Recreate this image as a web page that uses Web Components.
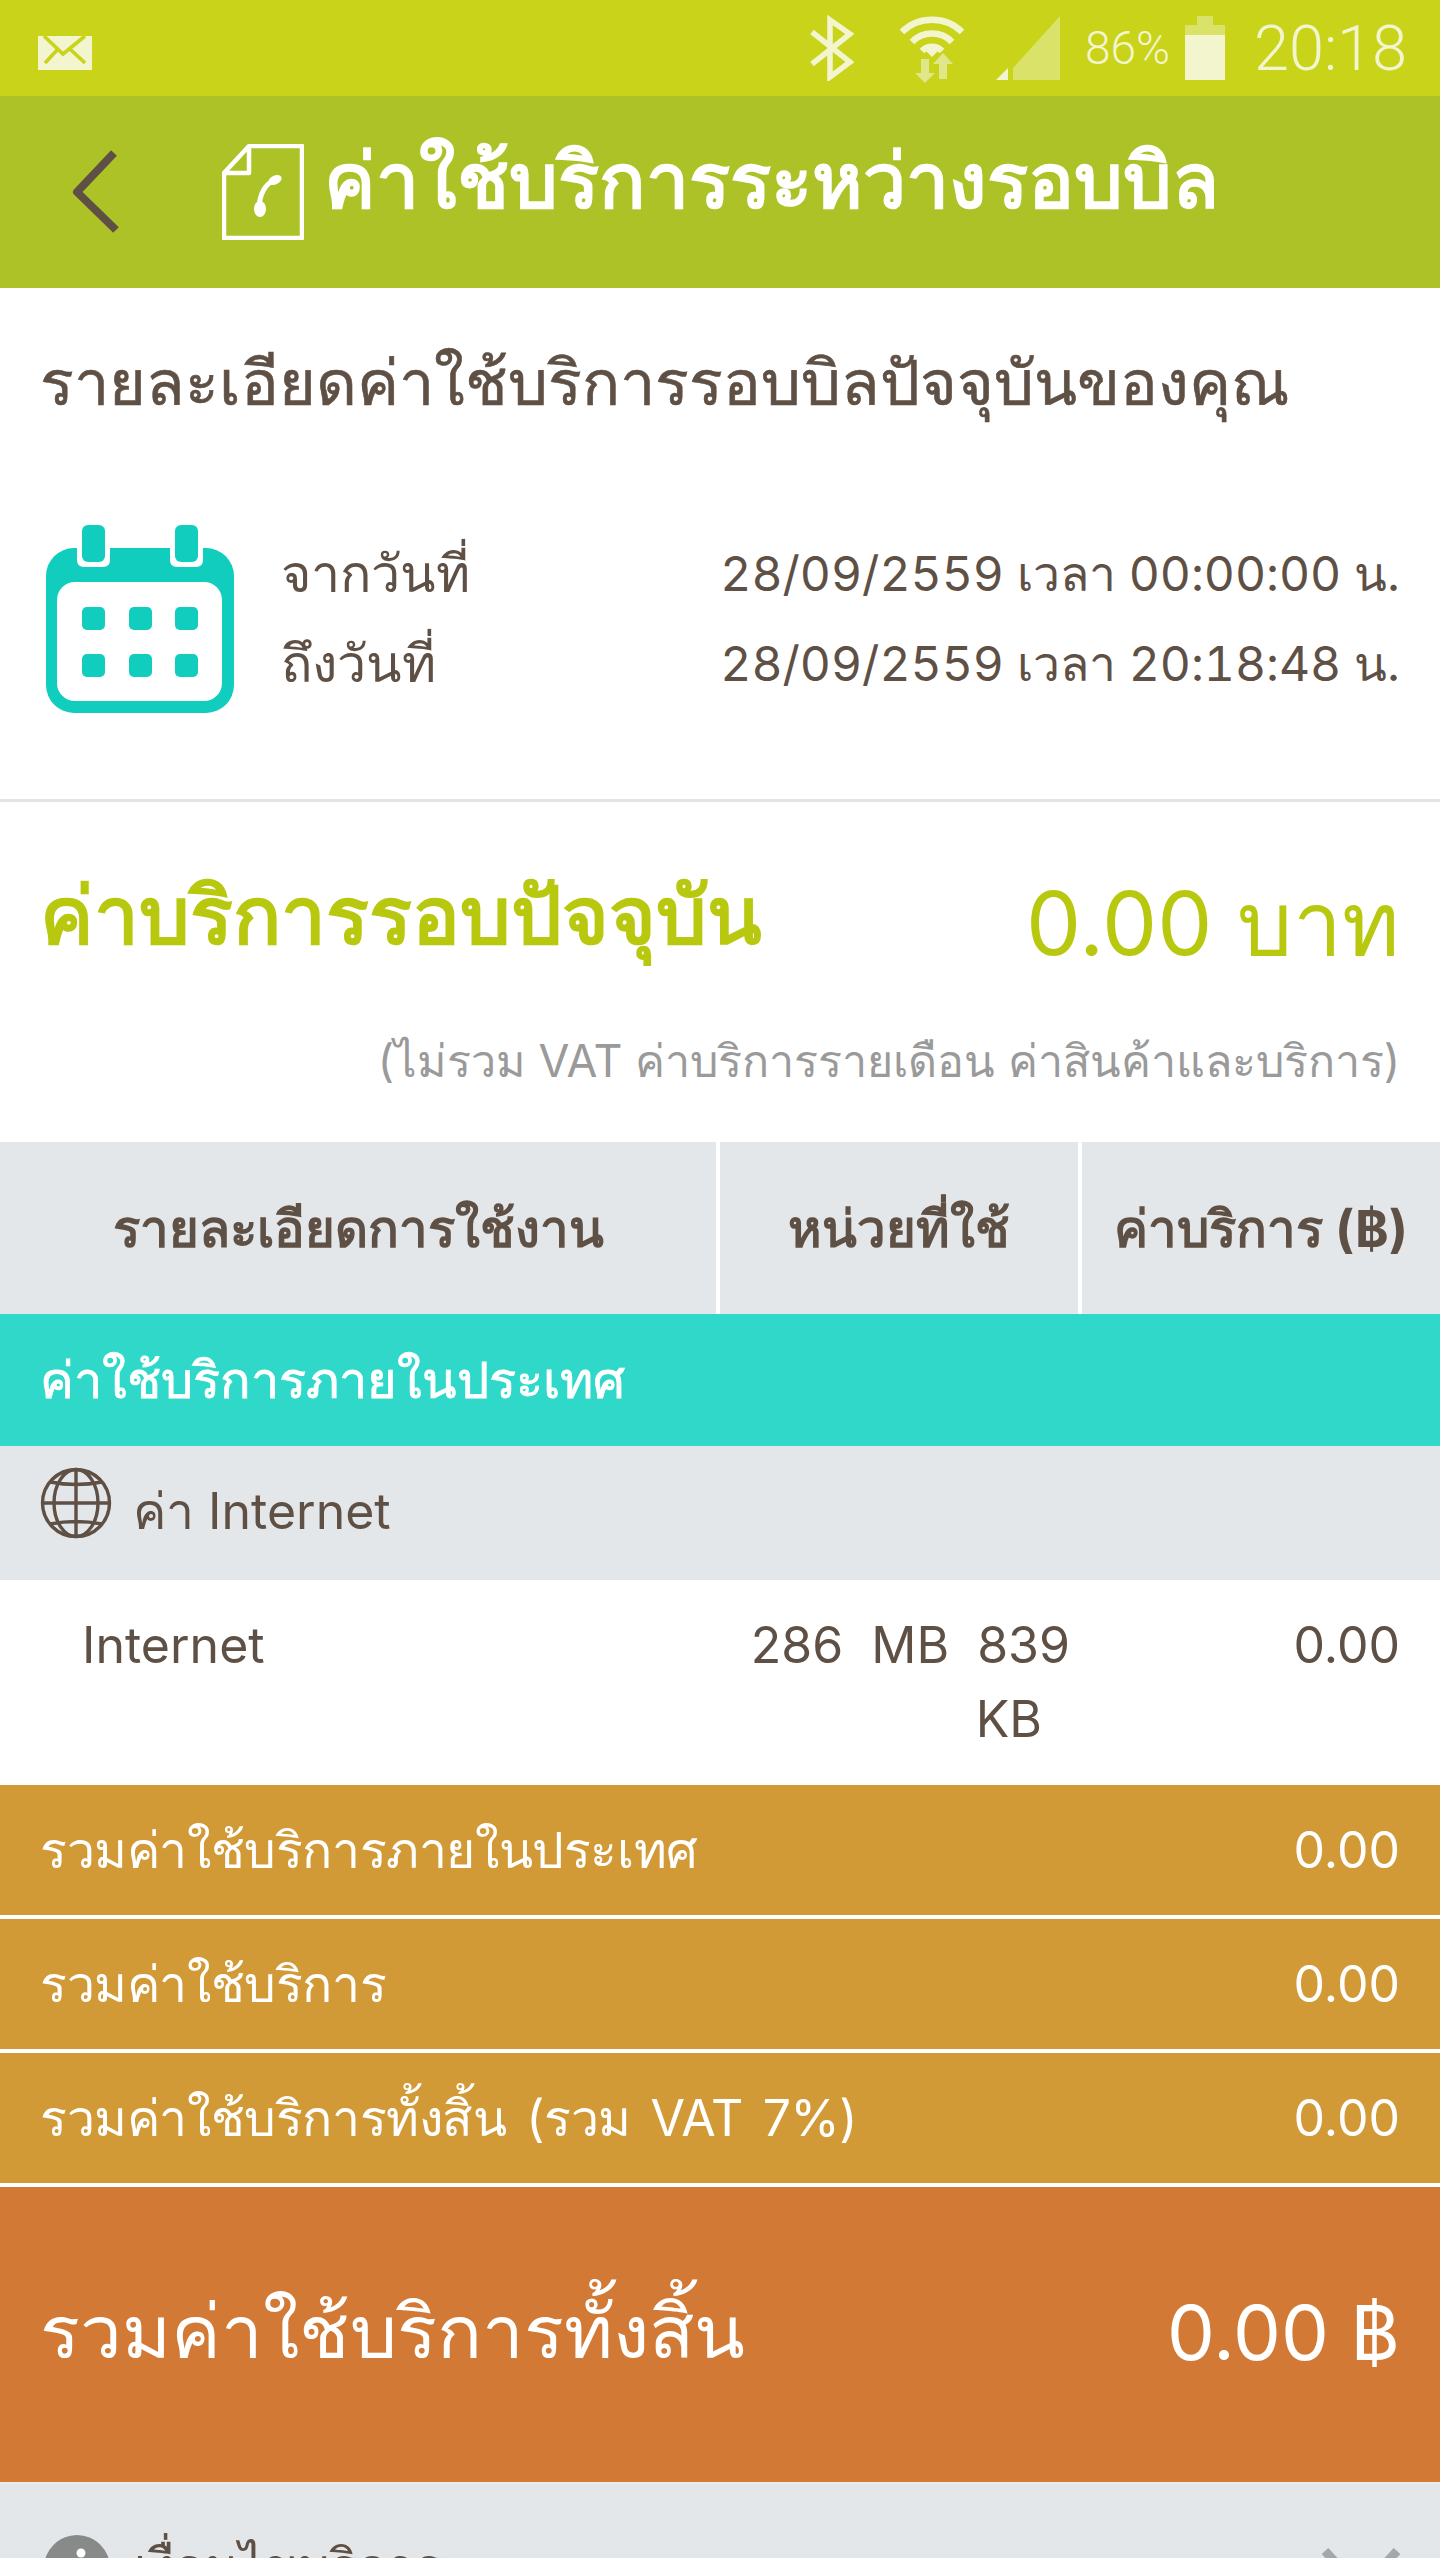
<!DOCTYPE html>
<html lang="th">
<head>
<meta charset="utf-8">
<title>ค่าใช้บริการระหว่างรอบบิล</title>
<style>
  html, body { margin: 0; padding: 0; background: #fff; }
  body { width: 1440px; height: 2560px; overflow: hidden; font-family: Inter, "Noto Sans", "DejaVu Sans", sans-serif; color: #5f5045; }
</style>
</head>
<body>
<status-bar></status-bar>
<app-header>ค่าใช้บริการระหว่างรอบบิล</app-header>
<bill-period></bill-period>
<bill-current></bill-current>
<table-head></table-head>
<section-title>ค่าใช้บริการภายในประเทศ</section-title>
<group-row>ค่า Internet</group-row>
<usage-row></usage-row>
<sum-row label="รวมค่าใช้บริการภายในประเทศ" value="0.00"></sum-row>
<sum-row label="รวมค่าใช้บริการ" value="0.00"></sum-row>
<sum-row label="รวมค่าใช้บริการทั้งสิ้น (รวม VAT 7%)" value="0.00"></sum-row>
<grand-total label="รวมค่าใช้บริการทั้งสิ้น" value="0.00 ฿"></grand-total>
<info-bar>เงื่อนไขบริการ</info-bar>

<script>
function define(name, html) {
  customElements.define(name, class extends HTMLElement {
    constructor() {
      super();
      this.attachShadow({ mode: "open" });
    }
    connectedCallback() {
      this.shadowRoot.innerHTML = html.replace(/\{(\w+)\}/g, (m, k) => this.getAttribute(k) ?? "");
    }
  });
}

define("status-bar", `
  <style>
    :host { display: flex; height: 96px; background: #c9d319; align-items: center; padding: 0 36px 0 38px; color: #f3f5cf; }
    .spacer { flex: 1; }
    svg { display: block; flex: none; }
    .pct { font: 300 46px Roboto, sans-serif; margin-left: 25px; width: 100px; white-space: nowrap; }
    .time { font: 300 63px Roboto, sans-serif; margin-left: 29px; width: 150px; text-align: right; white-space: nowrap; }
  </style>
  <svg style="margin-top:10px" width="54" height="34" viewBox="0 0 54 34">
    <rect width="54" height="34" fill="#f3f5cf"/>
    <path d="M6 0 L25 18 L47 0 M7 27 L20 13 M47 27 L32 13" fill="none" stroke="#c9d319" stroke-width="3.6"/>
  </svg>
  <span class="spacer"></span>
  <svg width="44" height="66" viewBox="0 0 44 66" fill="none" stroke="#f3f5cf" stroke-width="5.5">
    <path d="M2 17 L40 47 L20 62 V5 L40 19 L2 49"/>
  </svg>
  <svg style="margin-left:45px" width="66" height="70" viewBox="0 0 66 70">
    <path d="M3 19 A43 43 0 0 1 63 19 M13 29 A28 28 0 0 1 53 29 M23 38 A14 14 0 0 1 43 38" fill="none" stroke="#f3f5cf" stroke-width="6.5"/>
    <path d="M33 44 L25 36 A11 11 0 0 1 41 36 Z" fill="#f3f5cf"/>
    <path d="M22 46 H30 V60 H36 L26 70 L16 60 H22 Z M44 40 L54 51 H48 V66 H40 V51 H34 Z" fill="#e0e68a"/>
  </svg>
  <svg style="margin-left:31px" width="64" height="64" viewBox="0 0 64 64">
    <path d="M64 0 V64 H17 V52 Z" fill="#dbe26a"/>
    <path d="M0 64 L12 52 V64 Z" fill="#f3f5cf"/>
  </svg>
  <span class="pct">86%</span>
  <svg width="40" height="64" viewBox="0 0 40 64">
    <path d="M12 0 H28 V9 H40 V19 H0 V9 H12 Z" fill="#dbe26a"/>
    <rect y="19" width="40" height="45" fill="#f3f5cf"/>
  </svg>
  <span class="time">20:18</span>
`);

define("app-header", `
  <style>
    :host { display: flex; height: 192px; background: #acc227; align-items: center; padding-left: 72px; box-sizing: border-box; color: #fff; }
    svg { flex: none; display: block; }
    .title { font-size: 77px; font-weight: 700; margin-left: 20px; white-space: nowrap; padding-bottom: 22px; }
  </style>
  <svg width="48" height="84" viewBox="0 0 48 84" fill="none" stroke="#5f5045" stroke-width="8" stroke-linejoin="round">
    <path d="M42 3 L5 42 L44 80"/>
  </svg>
  <svg style="margin-left:102px" width="82" height="96" viewBox="0 0 82 96" fill="none" stroke="#fff" stroke-width="4.5" stroke-linejoin="round">
    <path d="M27 2 H80 V94 H2 V29 Z M27 2 V29 H2"/>
    <path d="M53 36 C44 39 37 50 37 65" stroke-width="5"/>
    <ellipse cx="53" cy="36" rx="7" ry="4.5" transform="rotate(-25 53 36)" fill="#fff" stroke="none"/>
    <ellipse cx="38" cy="65" rx="6" ry="8" fill="#fff" stroke="none"/>
  </svg>
  <span class="title"><slot></slot></span>
`);

define("bill-period", `
  <style>
    :host { display: block; height: 514px; box-sizing: border-box; border-bottom: 3px solid #e3e4e6; padding: 49px 40px 0; color: #5f5045; }
    .lead { font-size: 63px; line-height: 90px; -webkit-text-stroke: 0.6px #5f5045; white-space: nowrap; }
    .row { display: flex; align-items: center; margin-top: 98px; padding-left: 6px; }
    svg { flex: none; display: block; }
    .labels { margin-left: 47px; display: grid; grid-template-columns: 1fr auto; align-items: center; flex: 1; font-size: 52px; row-gap: 14px; line-height: 76px; }
    .v { font-size: 48px; text-align: right; white-space: nowrap; font-variant-numeric: tabular-nums; font-feature-settings: "calt" 0, "tnum" 1; }
  </style>
  <div class="lead">รายละเอียดค่าใช้บริการรอบบิลปัจจุบันของคุณ</div>
  <div class="row">
    <svg width="188" height="188" viewBox="0 0 188 188">
      <rect y="23" width="188" height="165" rx="28" fill="#10cdbe"/>
      <path d="M31 23 V35 Q31 42 38 42 H57 Q64 42 64 35 V23 Z M124 23 V35 Q124 42 131 42 H150 Q157 42 157 35 V23 Z" fill="#fff"/>
      <rect x="36" width="23" height="37" rx="6" fill="#10cdbe"/>
      <rect x="129" width="23" height="37" rx="6" fill="#10cdbe"/>
      <rect x="11" y="57" width="165" height="119" rx="18" fill="#fff"/>
      <g fill="#10cdbe">
        <rect x="36" y="82" width="23" height="23" rx="5"/><rect x="83" y="82" width="23" height="23" rx="5"/><rect x="129" y="82" width="23" height="23" rx="5"/>
        <rect x="36" y="129" width="23" height="23" rx="5"/><rect x="83" y="129" width="23" height="23" rx="5"/><rect x="129" y="129" width="23" height="23" rx="5"/>
      </g>
    </svg>
    <div class="labels">
      <span>จากวันที่</span><span class="v">28/09/2559 เวลา 00:00:00 น.</span>
      <span>ถึงวันที่</span><span class="v">28/09/2559 เวลา 20:18:48 น.</span>
    </div>
  </div>
`);

define("bill-current", `
  <style>
    :host { display: block; height: 340px; box-sizing: border-box; padding: 50px 40px 0; }
    .top { display: flex; justify-content: space-between; align-items: center; color: #b8c80f; }
    .name { font-size: 80px; font-weight: 700; padding-bottom: 26px; white-space: nowrap; }
    .amount { font-size: 87.5px; white-space: nowrap; padding-bottom: 10px; }
    .note { text-align: right; font-size: 44.8px; color: #9a9a9a; margin-top: 21px; white-space: nowrap; }
  </style>
  <div class="top"><span class="name">ค่าบริการรอบปัจจุบัน</span><span class="amount">0.00 บาท</span></div>
  <div class="note">(ไม่รวม VAT ค่าบริการรายเดือน ค่าสินค้าและบริการ)</div>
`);

define("table-head", `
  <style>
    :host { display: grid; grid-template-columns: 716px 358px 1fr; column-gap: 4px; height: 172px; background: #fff; font-size: 51px; font-weight: 700; color: #5f5045; }
    div { background: #e4e7ea; display: flex; align-items: center; justify-content: center; white-space: nowrap; }
  </style>
  <div>รายละเอียดการใช้งาน</div><div>หน่วยที่ใช้</div><div>ค่าบริการ (฿)</div>
`);

define("section-title", `
  <style>
    :host { display: flex; align-items: center; height: 132px; background: #30d8c9; color: #fff; font-size: 50.6px; -webkit-text-stroke: 0.8px #fff; padding: 0 40px; box-sizing: border-box; white-space: nowrap; }
  </style>
  <slot></slot>
`);

define("group-row", `
  <style>
    :host { display: flex; align-items: center; height: 134px; background: #e4e7ea; color: #5f5045; font-size: 50px; padding: 0 40px 20px; box-sizing: border-box; }
    svg { margin-right: 21px; flex: none; }
    span { padding-top: 16px; }
  </style>
  <svg width="72" height="72" viewBox="0 0 72 72" fill="none" stroke="#5f5045" stroke-width="3.4">
    <circle cx="36" cy="36" r="33.5"/>
    <ellipse cx="36" cy="36" rx="22" ry="33.5"/>
    <path d="M36 2 V70 M2 36 H70 M10 15 Q36 20 62 15 M10 57 Q36 52 62 57"/>
  </svg>
  <span><slot></slot></span>
`);

define("usage-row", `
  <style>
    :host { display: grid; grid-template-columns: 720px 350px 1fr; height: 205px; box-sizing: border-box; padding-top: 28px; font-size: 50px; line-height: 74px; color: #5f5045; }
    .name { padding-left: 82px; }
    .unit { text-align: right; word-spacing: 14px; white-space: nowrap; }
    .unit span { display: block; padding-right: 28px; }
    .cost { text-align: right; padding-right: 40px; }
  </style>
  <div class="name">Internet</div>
  <div class="unit">286 MB 839<span>KB</span></div>
  <div class="cost">0.00</div>
`);

define("sum-row", `
  <style>
    :host { display: flex; justify-content: space-between; align-items: center; height: 130px; margin-bottom: 4px; background: #d29a36; color: #fff; font-size: 50px; padding: 0 40px; box-sizing: border-box; white-space: nowrap; }
    .l { letter-spacing: -0.4px; word-spacing: 6px; }
  </style>
  <span class="l">{label}</span><span>{value}</span>
`);

define("grand-total", `
  <style>
    :host { display: flex; justify-content: space-between; align-items: center; height: 295px; background: #d27935; color: #fff; font-size: 74.5px; padding: 0 40px 6px; box-sizing: border-box; white-space: nowrap; }
    .v { font-size: 76px; }
  </style>
  <span>{label}</span><span class="v">{value}</span>
`);

define("info-bar", `
  <style>
    :host { display: flex; height: 76px; border-top: 2px solid #ececec; background: #e4e7ea; padding: 51px 40px 0 44px; box-sizing: border-box; overflow: hidden; font-size: 50px; color: #5f5045; }
    svg { flex: none; display: block; }
    .t { flex: 1; margin: -2px 0 0 24px; line-height: 66px; white-space: nowrap; }
    .c { margin-top: 13px; }
  </style>
  <svg width="66" height="66" viewBox="0 0 66 66">
    <circle cx="33" cy="33" r="33" fill="#888a89"/>
    <circle cx="37" cy="18" r="4.5" fill="#fff"/>
    <rect x="33" y="28" width="7" height="26" rx="3" fill="#fff"/>
  </svg>
  <div class="t"><slot></slot></div>
  <svg class="c" width="78" height="42" viewBox="0 0 78 42" fill="none" stroke="#a5a8a9" stroke-width="9"><path d="M3 3 L39 42 L75 3"/></svg>
`);
</script>
</body>
</html>
